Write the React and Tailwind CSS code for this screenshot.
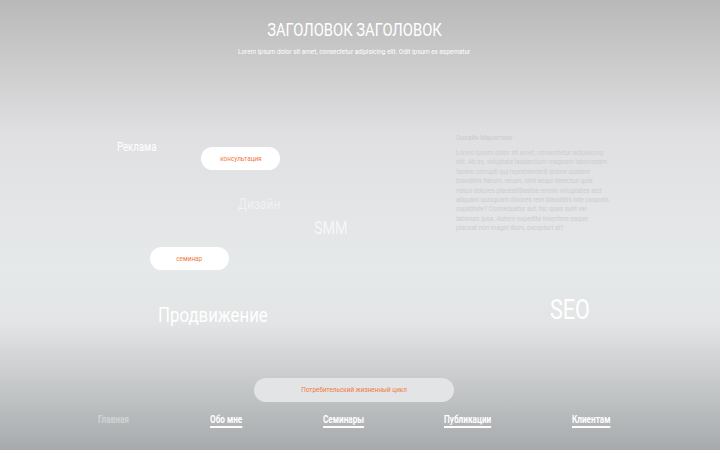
import React from "react";

const font = { fontFamily: "'Roboto', 'Liberation Sans', sans-serif" };

const lorem = [
  "Lorem ipsum dolor sit amet, consectetur adipisicing",
  "elit. Ab ex, voluptate laudantium magnam laboriosam",
  "facere corrupti qui reprehenderit dolore quidem",
  "blanditiis harum, rerum, nihil sequi delectus quia",
  "natus dolores placeat!Beatae omnis voluptates sed",
  "aliquam quisquam dolores rem blanditiis iste corporis",
  "cupiditate? Consequatur aut, hic quas sunt vel",
  "laborum ipsa. Autem expedita inventore eaque",
  "placeat non magni illum, excepturi at?",
];

const nav = ["Главная", "Обо мне", "Семинары", "Публикации", "Клиентам"];

// condensed look: Roboto squeezed horizontally
const Cond = ({ children, className = "" }) => (
  <span className={"inline-block whitespace-nowrap scale-x-[0.8] " + className}>{children}</span>
);

const App = () => {
  return (
    <div
      className="w-[720px] h-[450px] overflow-hidden flex flex-col bg-[linear-gradient(to_bottom,#b9b9b9_0%,#e0e0e2_30%,#e6e9e9_60%,#e2e4e5_72%,#a7aaac_100%)]"
      style={font}
    >
      {/* Header */}
      <header className="pt-[19px] pr-[12px] text-center text-white">
        <h1 className="text-[18px] leading-[22px]">
          <Cond className="origin-center scale-x-[0.82]">ЗАГОЛОВОК ЗАГОЛОВОК</Cond>
        </h1>
        <p className="mt-[6px] text-[8px] leading-[10px]">
          <Cond className="origin-center">
            Lorem ipsum dolor sit amet, consectetur adipisicing elit. Odit ipsum ex aspernatur
          </Cond>
        </p>
      </header>

      {/* Main: tag cloud on the left, text column on the right */}
      <main className="relative mt-[75px] h-[243px]">
        <Cond className="absolute left-[117px] top-[6px] origin-left text-[12px] text-white">Реклама</Cond>
        <button className="absolute left-[201px] top-[15px] w-[79px] h-[23px] rounded-full bg-white text-[8px] text-[#f2793a]">
          <Cond className="origin-center">консультация</Cond>
        </button>
        <Cond className="absolute left-[238px] top-[61px] origin-left text-[15px] text-white/50">Дизайн</Cond>
        <Cond className="absolute left-[314px] top-[82px] origin-left text-[18px] text-white/70">SMM</Cond>
        <button className="absolute left-[150px] top-[115px] w-[79px] h-[23px] rounded-full bg-white text-[8px] text-[#f2793a]">
          <Cond className="origin-center">семинар</Cond>
        </button>
        <Cond className="absolute left-[158px] top-[168px] origin-left text-[21px] text-white">Продвижение</Cond>
        <Cond className="absolute left-[550px] top-[158px] origin-left text-[27px] text-white">SEO</Cond>

        <div className="pl-[456px] pt-[1px] text-[#c9cacc]">
          <h3 className="text-[8px] leading-[10px]">
            <Cond className="origin-left">Онлайн Маркетинг</Cond>
          </h3>
          <p className="mt-[5px] text-[8px] leading-[9.4px] text-[#cdced0] origin-left scale-x-[0.8] whitespace-nowrap">
            {lorem.map((l) => (
              <span key={l} className="block">{l}</span>
            ))}
          </p>
        </div>
      </main>

      {/* Lifecycle */}
      <div className="flex justify-center pr-[12px] mt-[3px]">
        <button className="w-[200px] h-[24px] rounded-full bg-[#e2e4e5] text-[8px] text-[#f2793a]">
          <Cond className="origin-center">Потребительский жизненный цикл</Cond>
        </button>
      </div>

      {/* Nav */}
      <nav className="grid grid-cols-[112px_113px_121px_128px_auto] pl-[98px] mt-[10px] text-[10px] font-bold text-white">
        {nav.map((n, i) => (
          <a key={n} href="#" className="block">
            <Cond
              className={
                "origin-left scale-x-[0.82] " +
                (i === 0 ? "text-white/40" : "underline underline-offset-[3px] decoration-[1.5px]")
              }
            >
              {n}
            </Cond>
          </a>
        ))}
      </nav>
    </div>
  );
};

export default App;
